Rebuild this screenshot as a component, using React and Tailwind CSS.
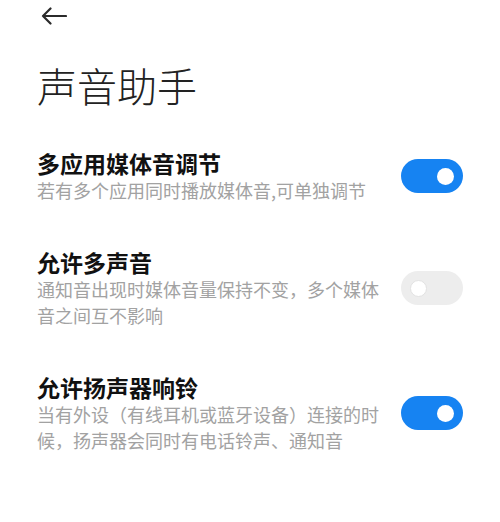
import React, { useState } from 'react'

const settings = [
  {
    id: 'multi-app',
    title: '多应用媒体音调节',
    desc: '若有多个应用同时播放媒体音,可单独调节',
    on: true,
  },
  {
    id: 'multi-sound',
    title: '允许多声音',
    desc: '通知音出现时媒体音量保持不变，多个媒体音之间互不影响',
    on: false,
  },
  {
    id: 'speaker-ring',
    title: '允许扬声器响铃',
    desc: '当有外设（有线耳机或蓝牙设备）连接的时候，扬声器会同时有电话铃声、通知音',
    on: true,
  },
]

function Toggle({ checked, onChange }) {
  return (
    <button
      type="button"
      onClick={onChange}
      className={`relative flex h-[34px] w-[62px] shrink-0 items-center rounded-full px-[9px] ${
        checked ? 'justify-end bg-[#1683f2]' : 'justify-start bg-[#ededed]'
      }`}
    >
      <span
        className={`block h-[17px] w-[17px] rounded-full bg-white ${
          checked ? '' : 'border border-[#e2e2e2]'
        }`}
      />
    </button>
  )
}

export default function App() {
  const [values, setValues] = useState(() =>
    Object.fromEntries(settings.map((s) => [s.id, s.on]))
  )

  return (
    <div
      className="h-[522px] w-[500px] overflow-hidden bg-white px-[37px]"
      style={{ fontFamily: '"Noto Sans CJK SC", "Noto Sans", sans-serif' }}
    >
      {/* Back arrow */}
      <div className="flex h-8 items-center pl-[4px]">
        <svg width="26" height="18" viewBox="0 0 26 18" fill="none">
          <path
            d="M25 9H2M9.5 1.5L2 9l7.5 7.5"
            stroke="#2b2b2b"
            strokeWidth="2.2"
            strokeLinecap="round"
            strokeLinejoin="round"
          />
        </svg>
      </div>

      <h1 className="mt-[29px] text-[40px] leading-[48px] font-light text-[#222]">声音助手</h1>

      {/* Settings list */}
      <div className="mt-[40px] flex flex-col gap-[45px]">
        {settings.map((s) => (
          <div key={s.id} className="flex items-center gap-[14px]">
            <div className="flex-1">
              <p className="text-[23px] leading-[28px] font-bold text-[#111]">{s.title}</p>
              <p className="text-[18px] leading-[26px] text-[#a2a2a2]">{s.desc}</p>
            </div>
            <Toggle
              checked={values[s.id]}
              onChange={() => setValues((v) => ({ ...v, [s.id]: !v[s.id] }))}
            />
          </div>
        ))}
      </div>
    </div>
  )
}
